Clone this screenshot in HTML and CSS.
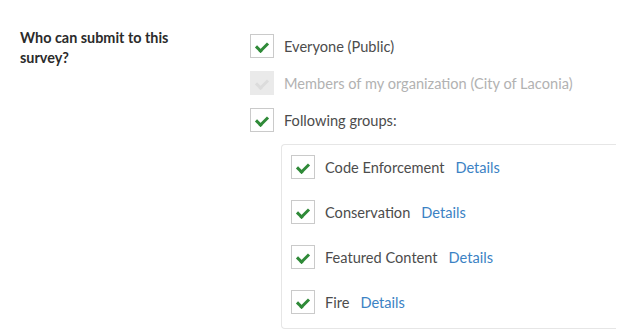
FILE: index.html
```html
<!DOCTYPE html>
<html lang="en">
  <head>
    <meta charset="UTF-8" />
    <title>Survey settings</title>
    <link rel="stylesheet" href="styles.css">
  </head>
  <body>
    <div class="setting">
      <div class="setting-label">Who can submit to this survey?</div>

      <div class="setting-options">
        <label class="option">
          <span class="check checked"></span>
          <span class="option-text">Everyone (Public)</span>
        </label>

        <label class="option disabled">
          <span class="check checked"></span>
          <span class="option-text">Members of my organization (City of Laconia)</span>
        </label>

        <label class="option">
          <span class="check checked"></span>
          <span class="option-text">Following groups:</span>
        </label>

        <div class="groups">
          <div class="option group">
            <span class="check checked"></span>
            <span class="option-text">Code Enforcement</span>
            <a href="#" class="details">Details</a>
          </div>
          <div class="option group">
            <span class="check checked"></span>
            <span class="option-text">Conservation</span>
            <a href="#" class="details">Details</a>
          </div>
          <div class="option group">
            <span class="check checked"></span>
            <span class="option-text">Featured Content</span>
            <a href="#" class="details">Details</a>
          </div>
          <div class="option group">
            <span class="check checked"></span>
            <span class="option-text">Fire</span>
            <a href="#" class="details">Details</a>
          </div>
        </div>
      </div>
    </div>
  </body>
</html>
```

FILE: styles.css
```css
* {
  margin: 0;
  padding: 0;
  box-sizing: border-box;
}

body {
  font-family: "Lato", "Noto Sans", sans-serif;
  background: white;
  color: #4c4c4c;
  overflow: hidden;
}

.setting {
  display: flex;
  padding: 28px 0 0 20px;
}

.setting-label {
  width: 230px;
  flex-shrink: 0;
  padding-right: 50px;
  font-size: 14.4px;
  font-weight: bold;
  line-height: 20px;
  color: #2b2b2b;
}

.setting-options {
  flex: 1;
  padding-top: 6px;
}

.option {
  display: flex;
  align-items: center;
  margin-bottom: 13px;
  font-size: 14.6px;
  cursor: pointer;
}

.check {
  width: 24px;
  height: 24px;
  flex-shrink: 0;
  border: 1px solid #cacaca;
  background: white;
  margin-right: 10px;
  position: relative;
}

.check.checked::after {
  content: "";
  position: absolute;
  left: 7px;
  top: 5px;
  width: 5px;
  height: 9px;
  border: solid #2f8a38;
  border-width: 0 3px 3px 0;
  transform: rotate(45deg);
}

.option.disabled {
  color: #b2b2b2;
  cursor: default;
}

.option.disabled .check {
  background: #eaeaea;
  border-color: #eaeaea;
}

.option.disabled .check::after {
  border-color: #dcdcdc;
}

.groups {
  margin: -1px 1px 0 31px;
  border: 1px solid #e6e6e6;
  border-right: none;
  border-radius: 4px 0 0 4px;
  padding: 10px 0 0 9px;
  height: 185px;
}

.option.group {
  margin-bottom: 21px;
  cursor: default;
}

.details {
  color: #3b82c4;
  text-decoration: none;
  margin-left: 11px;
}
```
